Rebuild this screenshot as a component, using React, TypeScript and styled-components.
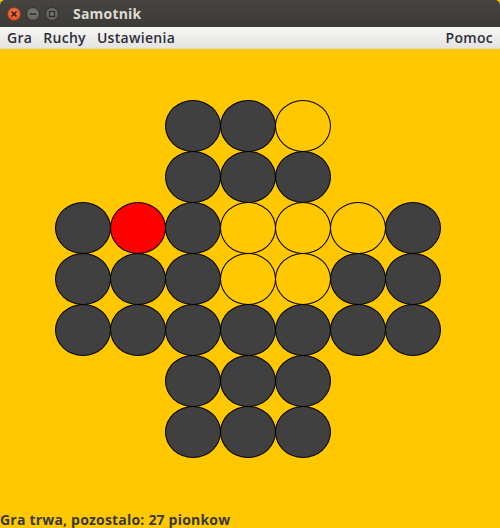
import React from "react";
import styled, { createGlobalStyle } from "styled-components";

const Global = createGlobalStyle`
  html, body { margin: 0; padding: 0; background: #ffc800; }
  body { width: 500px; height: 528px; overflow: hidden; font-family: "Open Sans", "DejaVu Sans", sans-serif; }
`;

const Window = styled.div`
  width: 500px;
  height: 528px;
  display: flex;
  flex-direction: column;
  background: #ffc800;
`;

const TitleBar = styled.div`
  height: 27px;
  flex: none;
  display: flex;
  align-items: center;
  padding-left: 7px;
  background: linear-gradient(#45443f, #3c3b37);
  border-radius: 5px 5px 0 0;
  box-sizing: border-box;
`;

const Controls = styled.div`
  display: flex;
  gap: 5px;
  align-items: center;
`;

const WinButton = styled.span<{ $close?: boolean }>`
  width: 14px;
  height: 14px;
  border-radius: 50%;
  display: flex;
  align-items: center;
  justify-content: center;
  box-sizing: border-box;
  background: ${(p) =>
    p.$close
      ? "radial-gradient(circle at 50% 40%, #f57a50, #df4b1d)"
      : "radial-gradient(circle at 50% 40%, #7b7a74, #5a5954)"};
  border: 1px solid ${(p) => (p.$close ? "#9a3a1a" : "#35342f")};
`;

const Title = styled.span`
  margin-left: 14px;
  color: #dfdbd2;
  font-weight: 700;
  font-size: 14px;
  letter-spacing: 0.2px;
`;

const MenuBar = styled.div`
  height: 22px;
  flex: none;
  display: flex;
  align-items: center;
  padding: 0 7px;
  box-sizing: border-box;
  background: linear-gradient(#f7f7f6, #e4e3e0);
  border-bottom: 1px solid #d8d6d0;
`;

const MenuItem = styled.span<{ $right?: boolean }>`
  font-size: 14px;
  font-weight: 600;
  letter-spacing: 0.3px;
  color: #2e2e3a;
  margin-right: ${(p) => (p.$right ? "0" : "11px")};
  margin-left: ${(p) => (p.$right ? "auto" : "0")};
`;

const Main = styled.div`
  flex: 1;
  display: flex;
  flex-direction: column;
  background: #ffc800;
`;

const BoardArea = styled.div`
  flex: 1;
  padding: 51px 0 0 55px;
`;

const Board = styled.div`
  display: grid;
  grid-template-columns: repeat(7, 55px);
  grid-template-rows: repeat(7, 51px);
`;

const Hole = styled.div<{ $state: "D" | "E" | "R" }>`
  width: 56px;
  height: 52px;
  box-sizing: border-box;
  border-radius: 50%;
  border: 1px solid #000;
  background: ${(p) => (p.$state === "D" ? "#404040" : p.$state === "R" ? "#ff0000" : "#ffc800")};
`;

const Blank = styled.div``;

const Status = styled.div`
  height: 20px;
  flex: none;
  font-size: 14px;
  font-weight: 700;
  letter-spacing: 0.2px;
  color: #3a3a3a;
  line-height: 20px;
  transform: translateY(2px);
`;

const layout = [
  "..DDE..",
  "..DDD..",
  "DRDEEED",
  "DDDEEDD",
  "DDDDDDD",
  "..DDD..",
  "..DDD..",
];

export default function App() {
  return (
    <Window>
      <Global />
      <TitleBar>
        <Controls>
          <WinButton $close>
            <svg width="8" height="8" viewBox="0 0 8 8">
              <path d="M1.5 1.5 L6.5 6.5 M6.5 1.5 L1.5 6.5" stroke="#3a1a10" strokeWidth="1.6" />
            </svg>
          </WinButton>
          <WinButton>
            <svg width="8" height="8" viewBox="0 0 8 8">
              <path d="M1 4 L7 4" stroke="#2e2d29" strokeWidth="1.6" />
            </svg>
          </WinButton>
          <WinButton>
            <svg width="8" height="8" viewBox="0 0 8 8">
              <rect x="1.5" y="1.5" width="5" height="5" fill="none" stroke="#2e2d29" strokeWidth="1.3" />
            </svg>
          </WinButton>
        </Controls>
        <Title>Samotnik</Title>
      </TitleBar>
      <MenuBar>
        <MenuItem>Gra</MenuItem>
        <MenuItem>Ruchy</MenuItem>
        <MenuItem>Ustawienia</MenuItem>
        <MenuItem $right>Pomoc</MenuItem>
      </MenuBar>
      <Main>
        <BoardArea>
          <Board>
            {layout.flatMap((row, r) =>
              row.split("").map((c, i) =>
                c === "." ? (
                  <Blank key={`${r}-${i}`} />
                ) : (
                  <Hole key={`${r}-${i}`} $state={c as "D" | "E" | "R"} />
                )
              )
            )}
          </Board>
        </BoardArea>
        <Status>Gra trwa, pozostalo: 27 pionkow</Status>
      </Main>
    </Window>
  );
}
